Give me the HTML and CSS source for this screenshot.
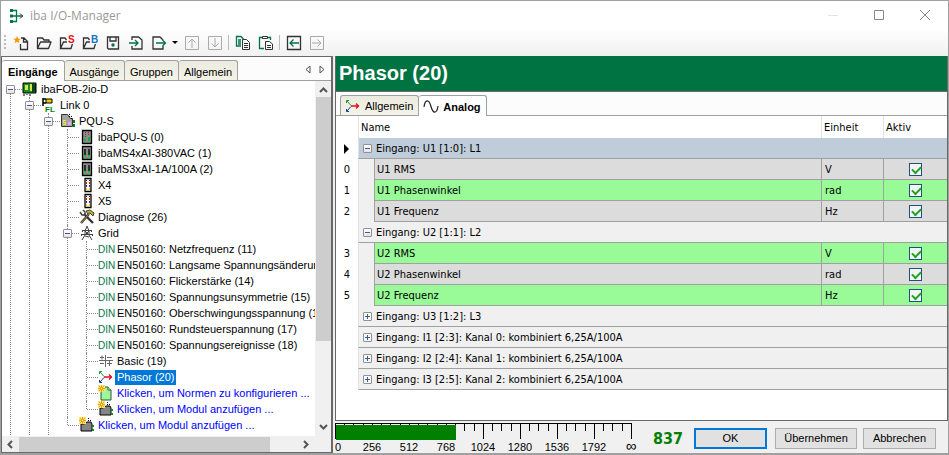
FILE: index.html
```html
<!DOCTYPE html>
<html lang="de">
<head>
    <meta charset="UTF-8">
    <meta name="viewport" content="width=device-width, initial-scale=1.0">
    <title>iba I/O-Manager</title>
    <link rel="stylesheet" href="styles.css">
</head>
<body>

    <!-- shared icons -->
    <svg class="defs" width="0" height="0">
        <symbol id="folder" viewBox="0 0 16 16"><path d="M1.500 13.500V3h5l1.500 2h5v2M1.500 13.500l3-6.500h10.500l-2.500 6.500z" fill="none" stroke="#333" stroke-width="1.300" stroke-linejoin="round"/></symbol>
        <symbol id="module" viewBox="0 0 16 16"><path d="M2 14V7h3l3-2h4l1 2v7z" fill="#858585" stroke="#000"/><path d="M9.500 1v4M11.500 3v2" stroke="#000" stroke-dasharray="1 1"/><path d="M13 8h2v2h-2zM13 12h2v2h-2z" fill="#0a8a20"/></symbol>
        <symbol id="card" viewBox="0 0 16 16"><path d="M3.500 1.500h9v13h-9z" fill="#8c8c8c" stroke="#000" stroke-width="1.300"/><path d="M5 4h2v8H5zM9 4h2v8H9z" fill="#2c2c2c"/><path d="M5 10h2v2H5zM9 10h2v2H9z" fill="#0c2"/></symbol>
        <symbol id="port" viewBox="0 0 16 16"><path d="M6 1.500h6v13H6z" fill="#fffbe0" stroke="#000" stroke-width="1.300"/><path d="M7 3h1v1H7zM10 3h1v1h-1z" fill="#222"/><path d="M7 5h1v2H7zM10 5h1v2h-1z" fill="#d11"/><path d="M7 8h1v2H7zM10 8h1v2h-1z" fill="#22c"/><path d="M7 11h1v2H7zM10 11h1v2h-1z" fill="#e0c000"/></symbol>
        <symbol id="phasor" viewBox="0 0 16 16"><path d="M2 3l4 4.500" stroke="#1a9a3a"/><path d="M1.500 5V2.500H4" fill="none" stroke="#1a9a3a"/><path d="M6 8.500L2 13" stroke="#123a9a"/><path d="M1.500 11v2.500H4" fill="none" stroke="#123a9a"/><path d="M6 8h8M11 5.500L13.500 8 11 10.500" fill="none" stroke="#e01020" stroke-width="1.300"/></symbol>
        <symbol id="spark" viewBox="0 0 16 16"><path d="M0 0h7v7H0z" fill="#ffe27a"/><path d="M3.500 0v7M0 3.500h7M1 1l5 5M6 1L1 6" stroke="#e5a800"/><path d="M3 3h1v1H3z" fill="#fff"/></symbol>
    </svg>

    <div class="window">
        <header class="titlebar">
            <svg class="app-icon" width="16" height="16" viewBox="0 0 16 16"><path d="M3 2.500h4.500v11H3M3 8h11" fill="none" stroke="#00734a" stroke-width="1.300"/><path d="M1 1h3v3H1zM1 6.500h3v3H1zM1 12h3v3H1z" fill="#00734a"/><path d="M11 5.500L13.500 8 11 10.500" fill="none" stroke="#333"/></svg>
            <h1>iba I/O-Manager</h1>
            <div class="window-buttons">
                <button aria-label="Minimieren"><svg width="12" height="12"><path d="M1 6.500h10" stroke="#e3e3e3"/></svg></button>
                <button aria-label="Maximieren"><svg width="12" height="12"><path d="M1.500 1.500h9v9h-9z" fill="none" stroke="#888"/></svg></button>
                <button aria-label="Schließen"><svg width="12" height="12"><path d="M1 1l10 10M11 1L1 11" stroke="#888"/></svg></button>
            </div>
        </header>

        <nav class="toolbar">
            <span class="grip"></span>
            <button aria-label="Neu"><svg width="16" height="16" viewBox="0 0 16 16"><path d="M8 3h3l3.500 3.500v8h-7V9M10.500 3v4h4" fill="none" stroke="#333" stroke-width="1.300"/><path d="M4 1l1 2.500 2.800.2-2.100 1.800.7 2.800L4 6.800 1.600 8.300l.7-2.800L.2 3.700 3 3.500z" fill="#f79a10"/></svg></button>
            <button aria-label="Öffnen"><svg width="16" height="16"><use href="#folder"/></svg></button>
            <button aria-label="Öffnen S"><svg width="16" height="16" viewBox="0 0 16 16"><path d="M1.500 13.500V3h4.500l1.500 2M1.500 13.500l3-6.500h9.500l-2 6.500z" fill="none" stroke="#333" stroke-width="1.300"/><path d="M8 0h8v9H8z" fill="#fcfcfc"/><text class="letter" x="9" y="8" fill="#f01010">S</text></svg></button>
            <button aria-label="Öffnen B"><svg width="16" height="16" viewBox="0 0 16 16"><path d="M1.500 13.500V3h4.500l1.500 2M1.500 13.500l3-6.500h9.500l-2 6.500z" fill="none" stroke="#333" stroke-width="1.300"/><path d="M8 0h8v9H8z" fill="#fcfcfc"/><text class="letter" x="9" y="8" fill="#1070d0">B</text></svg></button>
            <button aria-label="Speichern"><svg width="16" height="16" viewBox="0 0 16 16"><path d="M2.500 2h11v12h-10l-1-1zM5 2v4h6V2" fill="none" stroke="#333" stroke-width="1.300"/><circle cx="8" cy="10" r="1.700" fill="#00734a"/></svg></button>
            <button aria-label="Importieren"><svg width="16" height="16" viewBox="0 0 16 16"><path d="M4 5V2h6.500L14 5v9H4v-3" fill="none" stroke="#333" stroke-width="1.300"/><path d="M1 8h9M7 5l3 3-3 3" fill="none" stroke="#00734a" stroke-width="1.300"/></svg></button>
            <button aria-label="Exportieren"><svg width="16" height="16" viewBox="0 0 16 16"><path d="M12 5L9 2H2v12h10v-3" fill="none" stroke="#333" stroke-width="1.300"/><path d="M5 8h9.500M11.500 5l3 3-3 3" fill="none" stroke="#00734a" stroke-width="1.300"/></svg></button>
            <button class="drop" aria-label="Mehr"><svg width="6" height="4"><path d="M0 0h6L3 3z"/></svg></button>
            <button disabled aria-label="Nach oben"><svg width="16" height="16" viewBox="0 0 16 16"><path d="M1.500 1.500h13v13h-13zM8 13V4M4.500 7.500L8 4l3.500 3.500" fill="none" stroke="#aaa"/></svg></button>
            <button disabled aria-label="Nach unten"><svg width="16" height="16" viewBox="0 0 16 16"><path d="M1.500 1.500h13v13h-13zM8 3v9M4.500 8.500L8 12l3.500-3.500" fill="none" stroke="#aaa"/></svg></button>
            <span class="sep"></span>
            <button aria-label="Kopieren"><svg width="16" height="16" viewBox="0 0 16 16"><path d="M6 11H1.500V1.500H6L8.500 4M3 5h3M3 7h3M3 9h3" fill="none" stroke="#00734a" stroke-width="1.300"/><path d="M7.500 4.500h4l3 3v7h-7zM9 8.500h4M9 10.500h4M9 12.500h4" fill="none" stroke="#333"/></svg></button>
            <button aria-label="Einfügen"><svg width="16" height="16" viewBox="0 0 16 16"><path d="M6 13.500H1.500v-11h11V5" fill="none" stroke="#00734a" stroke-width="1.300"/><path d="M4.500 1.500h5v2h-5z" fill="#fff" stroke="#333"/><path d="M7.500 6.500h4l3 2.500v5.500h-7zM9 10.500h4M9 12.500h4" fill="none" stroke="#333"/></svg></button>
            <span class="sep"></span>
            <button aria-label="Zurück"><svg width="16" height="16" viewBox="0 0 16 16"><path d="M1.500 1.500h13v13h-13z" fill="none" stroke="#333" stroke-width="1.300"/><path d="M13 8H4M7.500 4.500L4 8l3.500 3.500" fill="none" stroke="#00734a" stroke-width="1.300"/></svg></button>
            <button disabled aria-label="Vor"><svg width="16" height="16" viewBox="0 0 16 16"><path d="M1.500 1.500h13v13h-13zM3 8h9M8.500 4.500L12 8l-3.500 3.500" fill="none" stroke="#aaa"/></svg></button>
        </nav>

        <div class="content">
            <aside class="sidebar">
                <div class="tabs">
                    <button class="tab active">Eingänge</button>
                    <button class="tab">Ausgänge</button>
                    <button class="tab">Gruppen</button>
                    <button class="tab">Allgemein</button>
                    <span class="tab-scroll">
                        <button aria-label="Tabs links"><svg width="6" height="9"><path d="M5 1v7L1 4.500z" fill="none" stroke="#555"/></svg></button>
                        <button aria-label="Tabs rechts"><svg width="6" height="9"><path d="M1 1v7l4-3.500z" fill="none" stroke="#555"/></svg></button>
                    </span>
                </div>

                <div class="tree-area">
                    <div class="tree">
                        <ul>
                            <li class="more">
                                <div class="node"><button class="toggle minus" aria-label="Zuklappen"></button><svg width="16" height="16" viewBox="0 0 16 16"><path d="M1 2h13v10H1z" fill="#1a8a2a" stroke="#000"/><path d="M3 4h3v5H3zM8 3h2v7H8z" fill="#d8e84a"/><path d="M11 3v8M13 3v8M2 13v2M5 13v1M8 13v2" stroke="#000"/></svg><span>ibaFOB-2io-D</span></div>
                                <ul>
                                    <li class="more">
                                        <div class="node"><button class="toggle minus" aria-label="Zuklappen"></button><svg width="16" height="16" viewBox="0 0 16 16"><path d="M2 1v8M2 2h3M2 6h3" stroke="#000" stroke-width="1.500"/><path d="M5 2h6v4H5z" fill="#e8d000" stroke="#000"/><text class="fl" x="4" y="15">FL</text></svg><span>Link 0</span></div>
                                        <ul>
                                            <li class="more">
                                                <div class="node"><button class="toggle minus" aria-label="Zuklappen"></button><svg width="16" height="16" viewBox="0 0 16 16"><path d="M1.500 1.500h6l3 4h2v8h-11z" fill="#a4a4a4" stroke="#333"/><path d="M9.500 1v4M11.500 3v3" stroke="#000" stroke-dasharray="1 1"/><path d="M6 7.500H3.500v2h2v2H3" fill="none" stroke="#f5ee30"/><path d="M8 9h3v3H8z" fill="#f59af0"/><path d="M13 7h2v3h-2zM13 11h2v3h-2z" fill="#0a7a20"/></svg><span>PQU-S</span></div>
                                                <ul>
                                                    <li><div class="node"><svg width="16" height="16" viewBox="0 0 16 16"><path d="M3.500 1.500h9v13h-9z" fill="#8c8c8c" stroke="#000" stroke-width="1.300"/><path d="M6.500 3v6M9.500 3v4" stroke="#a22" stroke-dasharray="1 1"/><path d="M5 10h2v2H5zM9 8h2v4H9z" fill="#0b3"/></svg><span>ibaPQU-S (0)</span></div></li>
                                                    <li><div class="node"><svg width="16" height="16"><use href="#card"/></svg><span>ibaMS4xAI-380VAC (1)</span></div></li>
                                                    <li><div class="node"><svg width="16" height="16"><use href="#card"/></svg><span>ibaMS3xAI-1A/100A (2)</span></div></li>
                                                    <li><div class="node"><svg width="16" height="16"><use href="#port"/></svg><span>X4</span></div></li>
                                                    <li><div class="node"><svg width="16" height="16"><use href="#port"/></svg><span>X5</span></div></li>
                                                    <li><div class="node"><svg width="16" height="16" viewBox="0 0 16 16"><path d="M2 14L10 5M14 14L5 5" stroke="#333" stroke-width="2.400"/><path d="M2 14l8-9" stroke="#c08a50"/><path d="M1 3l2 3 3 0V3L4 1" fill="none" stroke="#444" stroke-width="1.500"/><path d="M7 2l4-1 4 3-1 3-3-3-2 1z" fill="#c0b030" stroke="#443"/></svg><span>Diagnose (26)</span></div></li>
                                                    <li>
                                                        <div class="node"><button class="toggle minus" aria-label="Zuklappen"></button><svg width="16" height="16" viewBox="0 0 16 16"><path d="M8 1L6 6v4l-3 5M8 1l2 5v4l3 5M3 5.500h10M2 9.500h12M3.500 5v2M12.500 5v2M2.500 9v2M13.500 9v2M6 6l4 4M10 6l-4 4M6 11l4 1" fill="none" stroke="#444"/></svg><span>Grid</span></div>
                                                        <ul>
                                                            <li><div class="node"><b class="din">DIN</b><span>EN50160: Netzfrequenz (11)</span></div></li>
                                                            <li><div class="node"><b class="din">DIN</b><span>EN50160: Langsame Spannungsänderungen (12)</span></div></li>
                                                            <li><div class="node"><b class="din">DIN</b><span>EN50160: Flickerstärke (14)</span></div></li>
                                                            <li><div class="node"><b class="din">DIN</b><span>EN50160: Spannungsunsymmetrie (15)</span></div></li>
                                                            <li><div class="node"><b class="din">DIN</b><span>EN50160: Oberschwingungsspannung (16)</span></div></li>
                                                            <li><div class="node"><b class="din">DIN</b><span>EN50160: Rundsteuerspannung (17)</span></div></li>
                                                            <li><div class="node"><b class="din">DIN</b><span>EN50160: Spannungsereignisse (18)</span></div></li>
                                                            <li><div class="node"><svg width="16" height="16" viewBox="0 0 16 16"><path d="M1 7.500h14M7.500 2v12M2 4.500h4M4 2.500v4M9 4.500h5M2 10.500h4M9 10.500h5M11.500 8v5" fill="none" stroke="#666"/></svg><span>Basic (19)</span></div></li>
                                                            <li><div class="node selected"><svg width="16" height="16"><use href="#phasor"/></svg><span>Phasor (20)</span></div></li>
                                                            <li><div class="node link"><svg width="16" height="16" viewBox="0 0 16 16"><path d="M3 2h7l3 3v10H3z" fill="#9df59d" stroke="#2a5a2a"/><path d="M10 2v3h3" fill="#fff" stroke="#2a5a2a"/><use href="#spark"/></svg><a href="#">Klicken, um Normen zu konfigurieren ...</a></div></li>
                                                            <li><div class="node link"><svg width="16" height="16" viewBox="0 0 16 16"><use href="#module"/><use href="#spark"/></svg><a href="#">Klicken, um Modul anzufügen ...</a></div></li>
                                                        </ul>
                                                    </li>
                                                    <li><div class="node link"><svg width="16" height="16" viewBox="0 0 16 16"><use href="#module"/><use href="#spark"/></svg><a href="#">Klicken, um Modul anzufügen ...</a></div></li>
                                                </ul>
                                            </li>
                                        </ul>
                                    </li>
                                </ul>
                            </li>
                        </ul>
                    </div>
                    <div class="scroll vertical">
                        <svg width="9" height="6"><path d="M1 5l3.500-3.500L8 5" fill="none" stroke="#555" stroke-width="2"/></svg>
                        <span class="thumb"></span>
                        <svg width="9" height="6"><path d="M1 1l3.500 3.500L8 1" fill="none" stroke="#555" stroke-width="2"/></svg>
                    </div>
                </div>
                <div class="scroll horizontal">
                    <svg width="6" height="9"><path d="M5 1L1.500 4.500 5 8" fill="none" stroke="#555" stroke-width="2"/></svg>
                    <span class="thumb"></span>
                    <svg width="6" height="9"><path d="M1 1l3.500 3.500L1 8" fill="none" stroke="#555" stroke-width="2"/></svg>
                </div>
            </aside>

            <main class="main">
                <section class="panel">
                    <h2>Phasor (20)</h2>
                    <div class="tabs">
                        <button class="tab"><svg width="16" height="16"><use href="#phasor"/></svg>Allgemein</button>
                        <button class="tab active"><svg width="16" height="16" viewBox="0 0 16 16"><path d="M1 8C2 0 6 0 8 7.500S14 15 15 7" fill="none" stroke="#222" stroke-width="1.200"/></svg>Analog</button>
                    </div>
                    <table>
                        <colgroup>
                            <col class="c-num">
                            <col class="c-indent">
                            <col>
                            <col class="c-unit">
                            <col class="c-active">
                        </colgroup>
                        <thead>
                            <tr><th></th><th colspan="2">Name</th><th>Einheit</th><th>Aktiv</th></tr>
                        </thead>
                        <tbody>
                            <tr class="group current"><th><svg width="6" height="10"><path d="M0 0l5 5-5 5z"/></svg></th><td colspan="4"><button class="toggle minus" aria-label="Zuklappen"></button>Eingang: U1 [1:0]: L1</td></tr>
                            <tr><th>0</th><td class="indent"></td><td>U1 RMS</td><td>V</td><td><input type="checkbox" aria-label="U1 RMS aktiv" checked></td></tr>
                            <tr class="green"><th>1</th><td class="indent"></td><td>U1 Phasenwinkel</td><td>rad</td><td><input type="checkbox" aria-label="U1 Phasenwinkel aktiv" checked></td></tr>
                            <tr><th>2</th><td class="indent"></td><td>U1 Frequenz</td><td>Hz</td><td><input type="checkbox" aria-label="U1 Frequenz aktiv" checked></td></tr>
                            <tr class="group"><th></th><td colspan="4"><button class="toggle minus" aria-label="Zuklappen"></button>Eingang: U2 [1:1]: L2</td></tr>
                            <tr class="green"><th>3</th><td class="indent"></td><td>U2 RMS</td><td>V</td><td><input type="checkbox" aria-label="U2 RMS aktiv" checked></td></tr>
                            <tr><th>4</th><td class="indent"></td><td>U2 Phasenwinkel</td><td>rad</td><td><input type="checkbox" aria-label="U2 Phasenwinkel aktiv" checked></td></tr>
                            <tr class="green"><th>5</th><td class="indent"></td><td>U2 Frequenz</td><td>Hz</td><td><input type="checkbox" aria-label="U2 Frequenz aktiv" checked></td></tr>
                            <tr class="group"><th></th><td colspan="4"><button class="toggle plus" aria-label="Aufklappen"></button>Eingang: U3 [1:2]: L3</td></tr>
                            <tr class="group"><th></th><td colspan="4"><button class="toggle plus" aria-label="Aufklappen"></button>Eingang: I1 [2:3]: Kanal 0: kombiniert 6,25A/100A</td></tr>
                            <tr class="group"><th></th><td colspan="4"><button class="toggle plus" aria-label="Aufklappen"></button>Eingang: I2 [2:4]: Kanal 1: kombiniert 6,25A/100A</td></tr>
                            <tr class="group"><th></th><td colspan="4"><button class="toggle plus" aria-label="Aufklappen"></button>Eingang: I3 [2:5]: Kanal 2: kombiniert 6,25A/100A</td></tr>
                        </tbody>
                    </table>
                </section>

                <footer class="footer">
                    <svg class="gauge" width="304" height="30" viewBox="0 0 304 30">
                        <path d="M0 .5h297" stroke="#000"/>
                        <path class="ticks" d="M9.500 0v8M18.500 0v8M28.500 0v8M46.500 0v8M55.500 0v8M65.500 0v8M83.500 0v8M92.500 0v8M102.500 0v8M120.500 0v8M129.500 0v8M139.500 0v8M157.500 0v8M166.500 0v8M176.500 0v8M194.500 0v8M203.500 0v8M213.500 0v8M231.500 0v8M240.500 0v8M250.500 0v8M268.500 0v8M277.500 0v8M287.500 0v8"/>
                        <path class="ticks" d="M.5 0v16M37.500 0v16M74.500 0v16M111.500 0v16M148.500 0v16M185.500 0v16M222.500 0v16M259.500 0v16M296.500 0v16"/>
                        <rect x="1" y="2" width="120" height="15" fill="#008000"/>
                        <text x="3" y="28">0</text>
                        <text x="37" y="28">256</text>
                        <text x="74" y="28">512</text>
                        <text x="111" y="28">768</text>
                        <text x="148" y="28">1024</text>
                        <text x="185" y="28">1280</text>
                        <text x="222" y="28">1536</text>
                        <text x="259" y="28">1792</text>
                        <text class="inf" x="296" y="28">∞</text>
                    </svg>
                    <output>837</output>
                    <div class="actions">
                        <button class="ok">OK</button>
                        <button class="apply">Übernehmen</button>
                        <button>Abbrechen</button>
                    </div>
                </footer>
            </main>
        </div>
    </div>

</body>
</html>
```
FILE: styles.css
```css
* {
    box-sizing: border-box;
}

body {
    margin: 0;
    font-family: "Liberation Sans", Arial, sans-serif;
    font-size: 11px;
    color: #000;
    background: #f0f0f0;
}

button {
    font: inherit;
    color: inherit;
    padding: 0;
    border: none;
    background: none;
}

ul {
    list-style: none;
    margin: 0;
    padding: 0;
}

.defs {
    position: absolute;
}

.window {
    display: flex;
    flex-direction: column;
    height: 100vh;
    border: 1px solid #a0a0a0;
    border-bottom-width: 2px;
}

/* title bar */
.titlebar {
    display: flex;
    align-items: center;
    height: 30px;
    padding-left: 8px;
    background: #fff;
}

.titlebar h1 {
    margin: 0 0 0 5px;
    font-family: "Open Sans", "Noto Sans", sans-serif;
    font-size: 12px;
    font-weight: normal;
    line-height: 16px;
    color: #999;
}

.window-buttons {
    display: flex;
    margin-left: auto;
}

.window-buttons button {
    width: 46px;
    height: 28px;
}

/* toolbar */
.toolbar {
    display: flex;
    align-items: center;
    height: 25px;
    padding: 0 0 2px 3px;
    background: linear-gradient(#fdfdfd, #f1f1f1);
}

.toolbar button {
    display: flex;
    align-items: center;
    justify-content: center;
    width: 23px;
    height: 23px;
}

.toolbar .drop {
    width: 10px;
}

.grip {
    width: 2px;
    height: 16px;
    margin-right: 3px;
    background: repeating-linear-gradient(#bbb 0 2px, transparent 2px 4px);
}

.sep {
    width: 1px;
    height: 15px;
    margin: 0 2px;
    background: #bbb;
}

.letter {
    font-size: 10px;
    font-weight: bold;
}

.fl {
    font-size: 8px;
    font-weight: bold;
    fill: #008000;
}

/* layout */
.content {
    display: flex;
    flex: 1;
    min-height: 0;
}

.sidebar {
    display: flex;
    flex-direction: column;
    flex: none;
    width: 332px;
    border: 1px solid #696969;
    border-right-width: 2px;
    background: #fff;
}

.main {
    display: flex;
    flex-direction: column;
    flex: 1;
    min-width: 0;
    padding-left: 2px;
}

/* tabs */
.tabs {
    display: flex;
    align-items: flex-end;
    height: 24px;
    background: #fcfcfc;
    border-bottom: 1px solid #a0a0a0;
}

.tab {
    display: flex;
    align-items: center;
    height: 20px;
    padding: 2px 5px 0;
    border: 1px solid #a0a0a0;
    border-left-width: 0;
    border-bottom: none;
    border-radius: 3px 3px 0 0;
    background: linear-gradient(#ecebdf, #f4f3e8);
}

.tab.active {
    height: 21px;
    margin-bottom: -1px;
    background: #fff;
    font-weight: bold;
}

.sidebar .tab.active {
    padding: 2px 6px 0;
}

.tab-scroll {
    display: flex;
    gap: 8px;
    margin-left: auto;
    padding: 0 6px 4px 0;
}

/* tree */
.tree-area {
    display: flex;
    flex: 1;
    min-height: 0;
}

.tree {
    flex: 1;
    min-width: 0;
    overflow: hidden;
}

.tree ul ul {
    margin-left: 19px;
}

.tree li {
    position: relative;
}

.tree li::before {
    content: "";
    position: absolute;
    left: 8px;
    top: 0;
    bottom: 0;
    border-left: 1px dotted #888;
}

.tree li:last-child::before {
    bottom: auto;
    height: 8px;
}

.tree li.more::before {
    bottom: -4px;
    height: auto;
}

.tree > ul > li::before {
    top: 8px;
}

.node {
    position: relative;
    display: flex;
    align-items: center;
    height: 16px;
    padding-left: 9px;
    white-space: nowrap;
}

.node::before {
    content: "";
    flex: none;
    width: 11px;
    border-top: 1px dotted #888;
}

.node svg,
.din {
    flex: none;
    width: 16px;
}

.node span,
.node a {
    margin-left: 1px;
    padding: 1px 2px 2px;
}

.din {
    font-size: 10px;
    font-weight: normal;
    color: #00734a;
}

.node .toggle {
    position: absolute;
    left: 4px;
    top: 4px;
}

.selected span {
    background: #0078d7;
    color: #fff;
}

.link a {
    color: #0000ff;
    text-decoration: none;
}

.toggle {
    width: 9px;
    height: 9px;
    border: 1px solid #919191;
    border-radius: 1px;
    background: linear-gradient(#3a5aa5, #3a5aa5) center / 5px 1px no-repeat, linear-gradient(#fff, #e4e4e4);
}

.toggle.plus {
    background: linear-gradient(#3a5aa5, #3a5aa5) center / 5px 1px no-repeat, linear-gradient(#3a5aa5, #3a5aa5) center / 1px 5px no-repeat, #f8f8f8;
}

/* scroll bars */
.scroll {
    display: flex;
    align-items: center;
    background: #f0f0f0;
}

.scroll svg {
    flex: none;
}

.scroll .thumb {
    background: #cdcdcd;
}

.vertical {
    flex-direction: column;
    width: 16px;
    padding: 6px 0;
}

.vertical .thumb {
    width: 15px;
    height: 71%;
    margin: 4px 0 auto;
}

.horizontal {
    height: 16px;
    padding: 0 22px 0 5px;
}

.horizontal .thumb {
    width: 83%;
    height: 15px;
    margin: 0 auto 0 6px;
}

/* right panel */
.panel {
    flex: 1;
    min-height: 0;
    overflow: hidden;
    background: #fff;
    border: 1px solid #696969;
    border-top: none;
}

.panel h2 {
    margin: 0;
    height: 36px;
    padding-left: 3px;
    font-size: 20px;
    line-height: 35px;
    color: #fff;
    background: #007343;
    border-bottom: 1px solid #696969;
}

.panel .tabs {
    padding-left: 4px;
}

.panel .tab {
    gap: 4px;
    padding: 1px 5px 0 4px;
}

.panel .tab:first-child {
    border-left-width: 1px;
}

table {
    width: 100%;
    table-layout: fixed;
    border-collapse: separate;
    border-spacing: 0;
    font-family: "DejaVu Sans Condensed", "Noto Sans", sans-serif;
    font-size: 11px;
}

.c-num {
    width: 22px;
}

.c-indent {
    width: 16px;
}

.c-unit {
    width: 62px;
}

.c-active {
    width: 64px;
}

th,
td {
    height: 21px;
    padding: 0 3px;
    font-weight: normal;
    text-align: left;
    white-space: nowrap;
}

thead th {
    height: 22px;
    padding-left: 2px;
    border-left: 1px solid #e3e3e3;
}

thead th:first-child {
    border-left: none;
}

tbody th {
    padding: 0;
    text-align: center;
}

th svg {
    display: block;
    margin: 0 auto;
}

td {
    background: #dcdcdc;
    border-left: 1px solid #a0a0a0;
    border-bottom: 1px solid #a0a0a0;
}

td:nth-child(3) {
    padding-left: 2px;
}

td:last-child {
    text-align: center;
}

.green td {
    background: #98fb98;
}

tr td.indent {
    background: #f0f0f0;
    border-left-color: #e3e3e3;
    border-bottom-color: #f0f0f0;
}

.group td {
    background: #f0f0f0;
    border-left-color: #e3e3e3;
    text-align: left;
    padding-left: 4px;
}

.group.current td {
    background: #bfcddb;
}

.group .toggle {
    margin-right: 4px;
    vertical-align: 0;
}

td input {
    appearance: none;
    display: block;
    width: 13px;
    height: 13px;
    margin: 0 auto;
    border: 1px solid #1c5180;
    background: #f4f4f4;
}

td input:checked::before {
    content: "";
    display: block;
    width: 7px;
    height: 4px;
    margin: 2px;
    border-left: 2px solid #21a121;
    border-bottom: 2px solid #21a121;
    transform: rotate(-45deg);
}

/* footer */
.footer {
    display: flex;
    align-items: center;
    height: 32px;
    padding-top: 2px;
}

.gauge {
    flex: none;
    font-size: 11px;
    text-anchor: middle;
}

.gauge .ticks {
    stroke: #000;
}

.gauge .inf {
    font-size: 15px;
}

.footer output {
    margin-left: 14px;
    font-family: "DejaVu Sans Condensed", sans-serif;
    font-size: 16px;
    font-weight: bold;
    color: #008000;
}

.actions {
    display: flex;
    gap: 6px;
    margin-left: auto;
    padding-right: 12px;
}

.actions button {
    width: 73px;
    height: 21px;
    border: 1px solid #adadad;
    background: #e1e1e1;
}

.actions .ok {
    margin-right: 2px;
    border: 2px solid #0078d7;
}

.actions .apply {
    width: 82px;
}
```
